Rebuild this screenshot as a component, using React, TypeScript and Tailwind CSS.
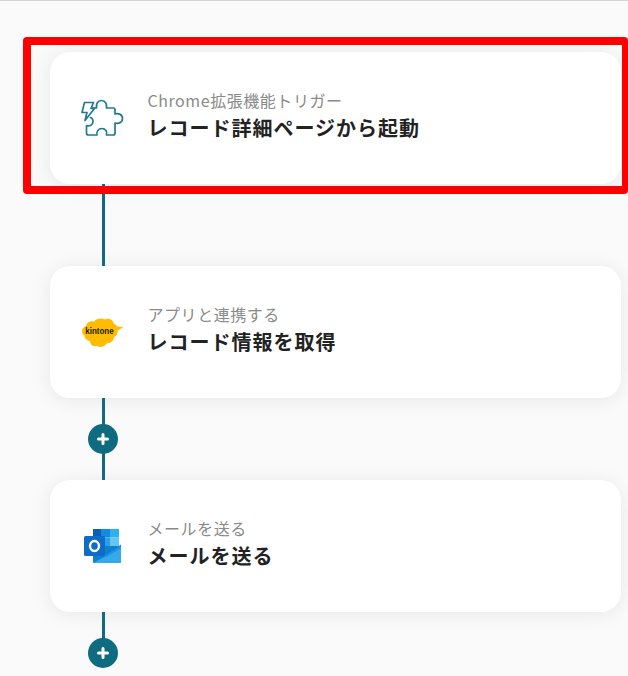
const font = { fontFamily: '"Noto Sans CJK JP", "Noto Sans", sans-serif' };

function PuzzleIcon() {
  return (
    <svg width="44" height="40" viewBox="0 0 44 40" fill="none" stroke="#1f7a92" strokeWidth="1.7" strokeLinejoin="round" strokeLinecap="round">
      <g transform="translate(0.500,0)">
        <path d="M11 10 L16 10 C15.500 6 17 2.500 21 2.500 C25 2.500 26.500 6 26 10 L33 10 C34 10 34.500 10.500 34.500 11.500 L34.500 16 C38 15 42 16.500 42 20.500 C42 24.500 38 26 34.500 25 L34.500 35 C34.500 36.200 34 37 33 37 L26 37 C27 33.500 25 30.500 21.500 30.500 C18 30.500 15.500 33.500 16.500 37 L8 37 C6.800 37 6 36.200 6 35 L6 27.500 C9 28.500 12.500 27 12.500 23.500 C12.500 21.500 11.500 20 10 19.500" />
        <path d="M4 4.500 L13 4.500 L10.500 10.500 L14 10.500 L4.500 22.500 L6.500 14.500 L1.500 14.500 Z" />
      </g>
    </svg>
  );
}

function KintoneIcon() {
  return (
    <svg width="44" height="36" viewBox="0 0 44 36">
      <g transform="translate(1,3.500) scale(1,1.050)">
        <path fill="#ffbc00" d="M5 8 C6 4 11 3 13 4 C15 1 21 0 24 2 C27 0 32 2 33 6 C35 7 36 8 36 8.500 L42.500 9 L36.500 12.500 C37 15 35 18 33 18.500 C33 22 29 25 26 24.500 C24 28 18 29 16 27 C13 28 9 26 9 22.500 C5 22 3 19 3.500 17 C0 15 0 10 5 8 Z" />
        <text x="18.500" y="16" textAnchor="middle" fontSize="8" fontWeight="700" fill="#1a1a1a" fontFamily="'Liberation Sans', sans-serif">kintone</text>
      </g>
    </svg>
  );
}

function OutlookIcon() {
  return (
    <svg width="42" height="36" viewBox="0 0 42 36">
      <g transform="translate(4,0)">
        <rect x="9" y="1" width="8" height="8.500" fill="#0a5fb4" />
        <rect x="17" y="1" width="9" height="8.500" fill="#0f8be0" />
        <rect x="26" y="1" width="9" height="8.500" fill="#2fb0ef" />
        <rect x="9" y="9.500" width="8" height="8.500" fill="#0a6fc8" />
        <rect x="17" y="9.500" width="9" height="8.500" fill="#27a2e8" />
        <rect x="26" y="9.500" width="9" height="8.500" fill="#63c6f5" />
        <path fill="#0f7fd0" d="M9 18 H35 L37 16.500 V34 C37 34.600 36.500 35 36 35 H10 C9.500 35 9 34.600 9 34 Z" />
        <path fill="#35a9ea" d="M9 35 L37 20 V34 C37 34.600 36.500 35 36 35 Z" />
        <path fill="#1a94e0" d="M9 19 L22 27 L37 17 V20 L22 29 L9 21 Z" />
        <rect x="0" y="8" width="21" height="20" rx="1.500" fill="#0f6cc6" />
        <ellipse cx="10.500" cy="18" rx="4.500" ry="5" fill="none" stroke="#ffffff" strokeWidth="2.400" />
      </g>
    </svg>
  );
}

function Card({ icon, sub, title }: { icon: React.ReactNode; sub: string; title: string }) {
  return (
    <div className="h-[132px] rounded-[20px] bg-white shadow-[0_2px_20px_rgba(0,0,0,0.08)] flex items-center">
      <div className="w-[97.500px] pl-[30px] shrink-0 flex items-center h-full">{icon}</div>
      <div className="flex flex-col -mt-[3px]">
        <span className="text-[16px] leading-[22px] tracking-[0.55px] text-[#8a8a8a]">{sub}</span>
        <span className="text-[20px] leading-[33px] tracking-[1px] font-bold text-[#222222]">{title}</span>
      </div>
    </div>
  );
}

function Connector({ plus, short }: { plus?: boolean; short?: boolean }) {
  return (
    <div className={`relative w-[3px] ml-[52px] bg-[#0e6b80] ${short ? "h-[50px]" : "h-[82px]"}`}>
      {plus && (
        <div className="absolute left-[-14px] top-[26px] w-[30px] h-[30px] rounded-full bg-[#0e6b80] flex items-center justify-center">
          <svg width="12" height="12" viewBox="0 0 12 12" stroke="#ffffff" strokeWidth="3" strokeLinecap="round">
            <path d="M6 1.500 V10.500 M1.500 6 H10.500" />
          </svg>
        </div>
      )}
    </div>
  );
}

export default function App() {
  return (
    <div className="relative w-[628px] h-[676px] overflow-hidden bg-[#fafafa] border-t border-[#d4d4d4]" style={font}>
      <div className="pt-[51px] pl-[50px] pr-[7px] flex flex-col">
        <Card icon={<PuzzleIcon />} sub="Chrome拡張機能トリガー" title="レコード詳細ページから起動" />
        <Connector />
        <Card icon={<KintoneIcon />} sub="アプリと連携する" title="レコード情報を取得" />
        <Connector plus />
        <Card icon={<OutlookIcon />} sub="メールを送る" title="メールを送る" />
        <Connector plus short />
      </div>
      <div className="absolute left-[23px] top-[36px] w-[605px] h-[157px] border-[8px] border-r-[6px] border-[#ff0000] rounded-[4px] pointer-events-none" />
    </div>
  );
}
